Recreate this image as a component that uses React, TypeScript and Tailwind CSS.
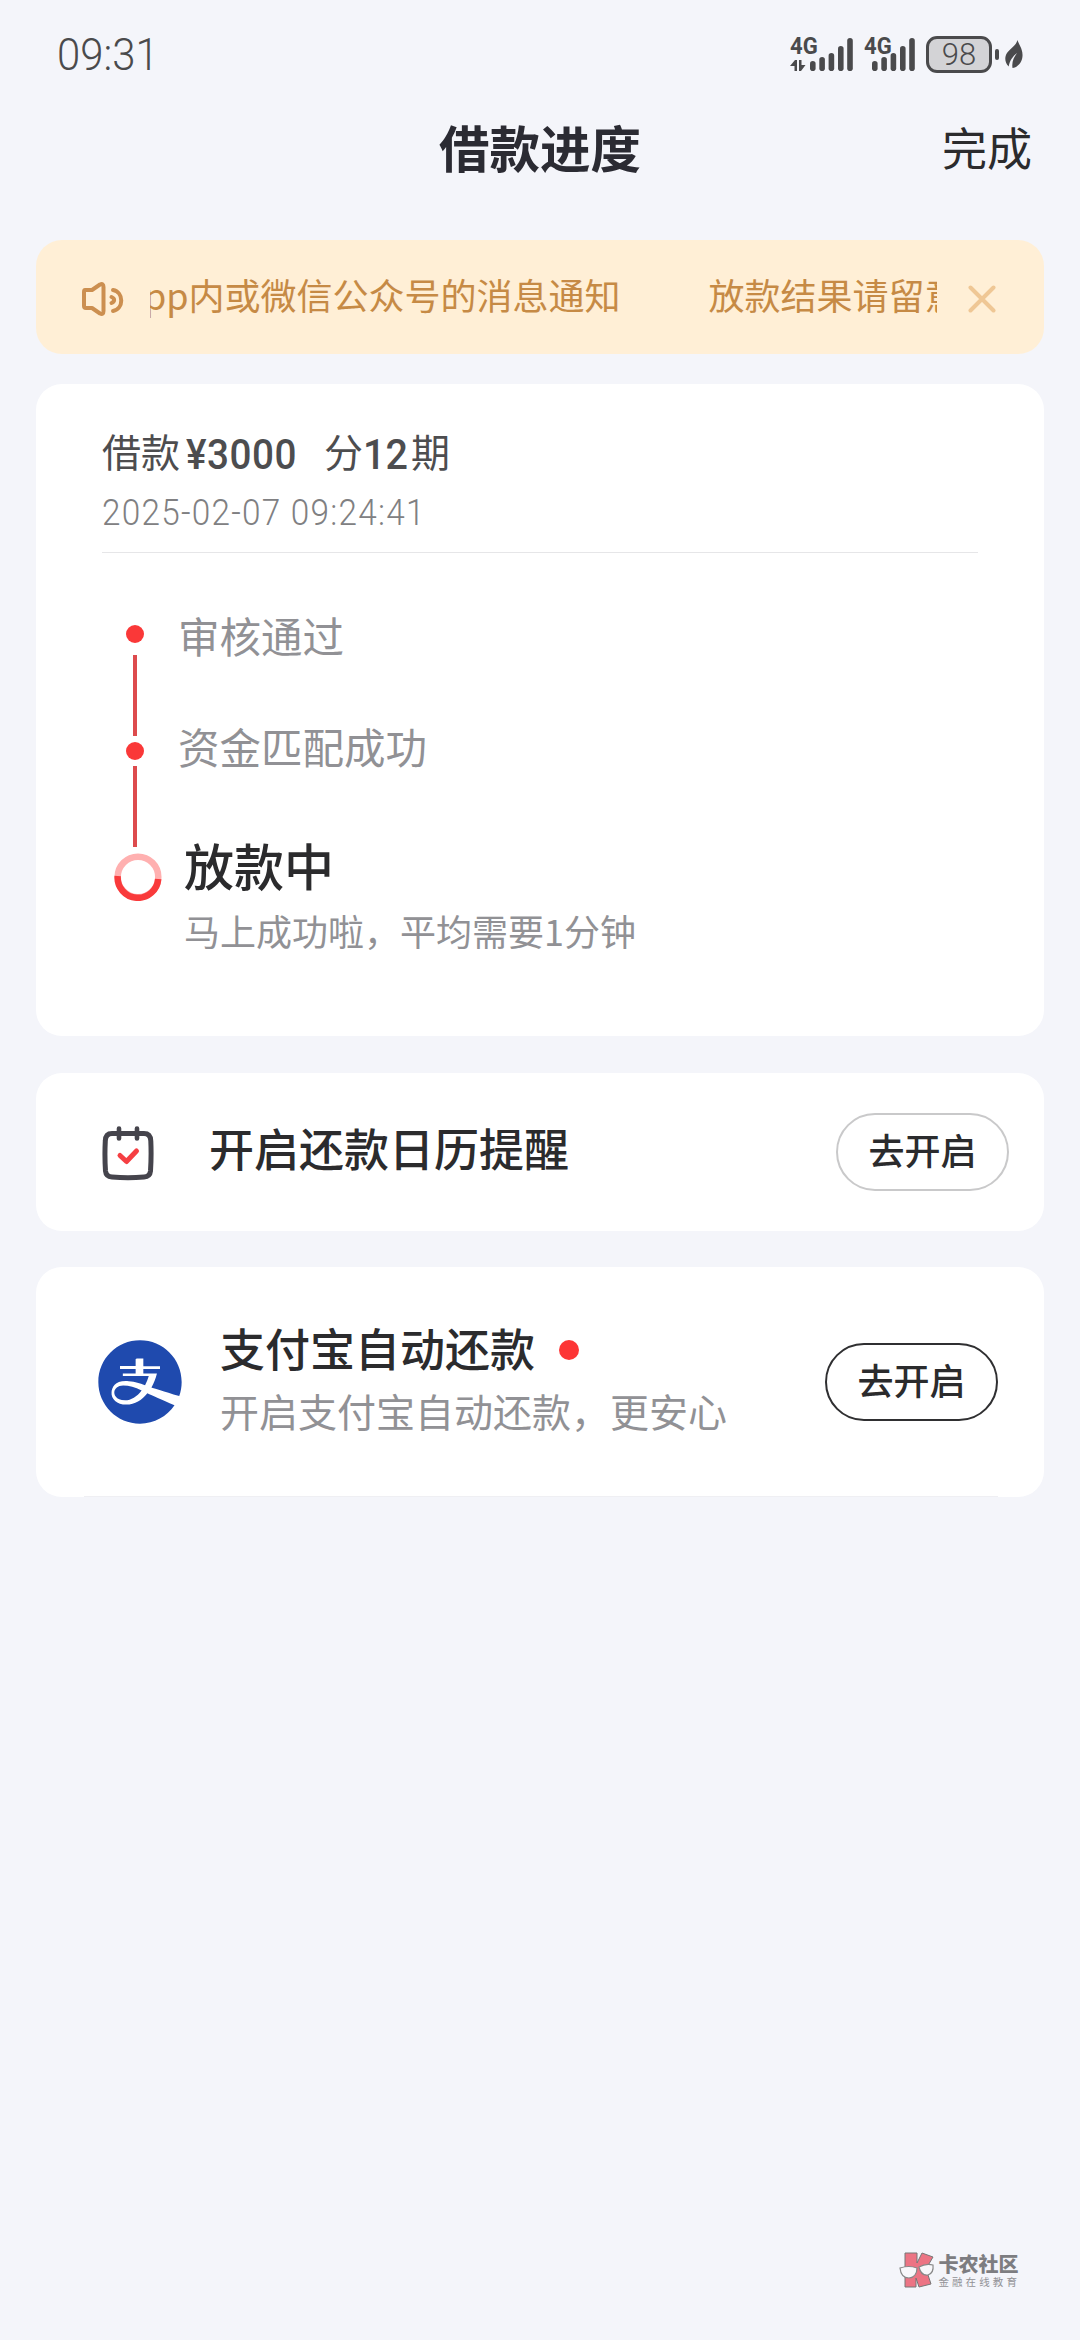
import { RiAlipayFill } from "react-icons/ri";

const finishedSteps = ["审核通过", "资金匹配成功"];

function SignalBars() {
  return (
    <svg width="43" height="33" viewBox="0 0 43 33" fill="#4a4a4c" aria-hidden="true">
      <rect x="0" y="23" width="5.6" height="10" rx="2.8" />
      <rect x="9.3" y="19" width="5.6" height="14" rx="2.8" />
      <rect x="18.6" y="15" width="5.6" height="18" rx="2.8" />
      <rect x="28" y="8" width="5.6" height="25" rx="2.8" />
      <rect x="37.2" y="0" width="5.6" height="33" rx="2.8" />
    </svg>
  );
}

function StatusBar() {
  return (
    <div className="flex h-[108px] items-center justify-between pl-[57px] pr-[57px] text-[#4a4a4c]">
      <span className="origin-left scale-x-[0.93] font-[Roboto] text-[45px] font-light leading-none">09:31</span>
      <div className="flex items-center">
        <div className="relative flex w-[63px] justify-end">
          <span className="absolute left-0 -top-[2px] origin-left scale-x-[0.96] font-[Roboto] text-[23px] font-bold leading-[22px]">4G</span>
          <svg className="absolute left-0 bottom-0" width="16" height="11" viewBox="0 0 16 11" fill="#4a4a4c" aria-hidden="true">
            <path d="M0 6 L5 0 H7 V11 H4.5 V6 Z" />
            <path d="M15.5 5 L11 11 H9 V0 H11.5 V5 Z" />
          </svg>
          <SignalBars />
        </div>
        <div className="relative ml-[11px] flex w-[51px] justify-end">
          <span className="absolute left-0 -top-[2px] origin-left scale-x-[0.96] font-[Roboto] text-[23px] font-bold leading-[22px]">4G</span>
          <SignalBars />
        </div>
        <div className="ml-[11px] flex h-[37px] w-[66px] items-center justify-center rounded-[11px] border-[3px] border-[#4a4a4c] bg-[#d3d3d6]">
          <span className="font-[Roboto] text-[31px] font-light leading-none">98</span>
        </div>
        <div className="ml-[3px] h-[11px] w-[4px] rounded-full bg-[#4a4a4c]" />
        <svg className="ml-[6px]" width="18" height="29" viewBox="0 0 18 29" aria-hidden="true">
          <path d="M12.5 0 C13.5 4 18 9 17.5 16 C17 23 12.500 27 7.500 28 C6.500 22 9 17 12 13 C8 16 4.500 21 3.700 26.500 C-0.500 22 -0.500 17 2 13 C5 8.500 11 6 12.500 0 Z" fill="#4a4a4c" />
        </svg>
      </div>
    </div>
  );
}

function NoticeBar() {
  return (
    <div className="flex h-[114px] items-center rounded-[26px] bg-[#ffefd6] pl-[46px] pr-[48px] text-[#c68a45]">
      <svg className="mt-1" width="42" height="34" viewBox="0 0 42 34" fill="none" stroke="#cc8f50" strokeWidth="4" strokeLinecap="round" strokeLinejoin="round" aria-hidden="true">
        <path d="M3 8 Q2 8 2 10 V24 Q2 26 4 26 H10 L18 31.500 Q21.500 33 21.500 29 V5 Q21.500 1 18 2.500 L10 8 Z" />
        <path d="M31 8 C42 10 42 27 31 29" />
        <path d="M29.500 15 C33 16.500 33 19.500 29.500 21" />
      </svg>
      <div className="-mt-[6px] ml-[26px] flex w-[787px] overflow-hidden whitespace-nowrap text-[36px] leading-[56px]">
        <span className="-ml-[28px]">App内或微信公众号的消息通知</span>
        <span className="ml-[88px]">放款结果请留意App内</span>
      </div>
      <svg className="ml-[31px] mt-[4px]" width="28" height="28" viewBox="0 0 28 28" fill="none" stroke="#efc795" strokeWidth="4" strokeLinecap="round" aria-hidden="true">
        <path d="M2.500 2.500 L25.500 25.500 M25.500 2.500 L2.500 25.500" />
      </svg>
    </div>
  );
}

function ProgressCard() {
  return (
    <section className="mt-[30px] h-[652px] rounded-[26px] bg-white px-[66px] pt-[39px]">
      <div className="flex h-[54px] items-center text-[39px] leading-[54px] text-[#4d4d4f]">
        <span>借款</span>
        <span className="ml-[6px] mt-[9px] w-[118px] origin-left scale-x-[0.92] font-[Roboto] text-[42px] font-medium tracking-[0.6px]">¥3000</span>
        <span className="ml-[20px]">分</span>
        <span className="mt-[9px] w-[48px] origin-left scale-x-[0.94] font-[Roboto] text-[42px] font-medium">12</span>
        <span>期</span>
      </div>
      <p className="mt-[10px] h-[52px] origin-left scale-x-[0.9] whitespace-nowrap font-[Roboto] text-[37px] font-light leading-[52px] tracking-[1.4px] text-[#808082]">
        2025-02-07 09:24:41
      </p>
      <div className="mt-[13px] h-px bg-[#e6e6e8]" />

      <div className="mt-[72px] flex">
        <div className="flex w-[76px] flex-col items-start">
          <div className="ml-[24px] size-[18px] rounded-full bg-[#fa3838]" />
          <div className="ml-[31px] mt-[12px] h-[81px] w-[4px] bg-[#dd4b4d]" />
          <div className="ml-[24px] mt-[6px] size-[18px] rounded-full bg-[#fa3838]" />
          <div className="ml-[31px] mt-[6px] h-[81px] w-[4px] bg-[#dd4b4d]" />
          <svg className="ml-[12px] mt-[6px]" width="48" height="48" viewBox="0 0 48 48" fill="none" strokeWidth="6.500" aria-hidden="true">
            <circle cx="24" cy="24" r="20.300" stroke="#ffb0b0" />
            <path d="M3.700 23 A20.300 20.300 0 1 0 44.200 26" stroke="#f93a3b" />
          </svg>
        </div>
        <div className="-mt-[18px]">
          {finishedSteps.map((step) => (
            <p key={step} className="h-[111px] text-[41.500px] leading-[56px] text-[#919195]">
              {step}
            </p>
          ))}
          <p className="ml-[6px] text-[50px] font-medium leading-[70px] text-[#2b2b2d]">放款中</p>
          <p className="ml-[6px] mt-[6px] text-[36px] leading-[50px] text-[#919195]">马上成功啦，平均需要1分钟</p>
        </div>
      </div>
    </section>
  );
}

function CalendarCard() {
  return (
    <section className="mt-[37px] flex h-[158px] items-center rounded-[26px] bg-white pl-[66px] pr-[35px]">
      <svg className="mt-[3px]" width="52" height="55" viewBox="0 0 52 55" fill="none" strokeLinecap="round" strokeLinejoin="round" aria-hidden="true">
        <path d="M10 7.500 H42 Q48.500 7.500 48.800 15 Q49.500 30 48.500 45 Q48 50.500 42 51 Q26 52.500 10 51 Q4 50.500 3.500 45 Q2.500 30 3.300 15 Q3.500 7.500 10 7.500 Z" stroke="#45444c" strokeWidth="5" />
        <path d="M17 2.500 V12.500 M35 2.500 V12.500" stroke="#45444c" strokeWidth="4.600" />
        <path d="M18 29.500 L24.500 35.500 L34.500 25" stroke="#f53f43" strokeWidth="5" />
      </svg>
      <h2 className="-mt-[8px] ml-[55px] text-[45px] font-medium leading-[60px] text-[#2b2b2d]">开启还款日历提醒</h2>
      <button className="ml-auto h-[78px] w-[173px] rounded-full border-2 border-[#c9c9ca] pb-[6px] text-[36px] font-medium leading-none text-[#2b2b2d]">
        去开启
      </button>
    </section>
  );
}

function AlipayCard() {
  return (
    <section className="relative mt-[36px] flex h-[230px] items-center rounded-[26px] bg-white pl-[62px] pr-[46px]">
      <RiAlipayFill className="-m-[8px] size-[100px] text-[#1f4aae]" />
      <div className="-mt-[9px] ml-[38px]">
        <div className="flex items-center">
          <h2 className="text-[45px] font-medium leading-[64px] text-[#2b2b2d]">支付宝自动还款</h2>
          <span className="ml-[24px] mt-[5px] size-[20px] rounded-full bg-[#fd3636]" />
        </div>
        <p className="text-[39px] leading-[60px] text-[#919195]">开启支付宝自动还款，更安心</p>
      </div>
      <button className="ml-auto h-[78px] w-[173px] rounded-full border-2 border-[#2f2f31] pb-[6px] text-[36px] font-medium leading-none text-[#2b2b2d]">
        去开启
      </button>
      <div className="absolute bottom-0 left-[48px] right-[46px] h-[1.5px] bg-[#efeff3]" />
    </section>
  );
}

function Brand() {
  return (
    <div className="mt-auto mb-[51px] mr-[60px] flex items-center self-end">
      <svg width="36" height="37" viewBox="0 0 36 37" aria-hidden="true">
        <path d="M6 1 H18 V11 L23 1 L34 5 L27 17 L32 32 L20 35 L17 26 V35 H6 Z" fill="#ec7484" stroke="#777" strokeWidth="1" />
        <path d="M1 16 Q10 13 18 16 Q18 25 10 26 Q2 26 1 16 Z M20 15 Q27 11 34 13 Q35 21 29 23 Q22 24 20 15 Z" fill="#f8f8fb" stroke="#888" strokeWidth="1.200" />
      </svg>
      <div className="ml-[3px]">
        <p className="text-[20px] font-black leading-[22px] text-[#7d7d81]">卡农社区</p>
        <p className="text-[10.500px] leading-[14px] tracking-[3.100px] text-[#929296]">金融在线教育</p>
      </div>
    </div>
  );
}

export default function App() {
  return (
    <div className="flex h-[2340px] w-[1080px] flex-col overflow-hidden bg-[#f4f5fa] font-['Noto_Sans_CJK_SC',sans-serif]">
      <StatusBar />
      <header className="grid h-[76px] grid-cols-3 items-center px-[48px]">
        <span />
        <h1 className="text-center text-[50.500px] font-bold leading-none text-[#2b2b33]">借款进度</h1>
        <span className="text-right text-[45px] leading-none text-[#2b2b2d]">完成</span>
      </header>
      <main className="mt-[56px] px-[36px]">
        <NoticeBar />
        <ProgressCard />
        <CalendarCard />
        <AlipayCard />
      </main>
      <Brand />
    </div>
  );
}
